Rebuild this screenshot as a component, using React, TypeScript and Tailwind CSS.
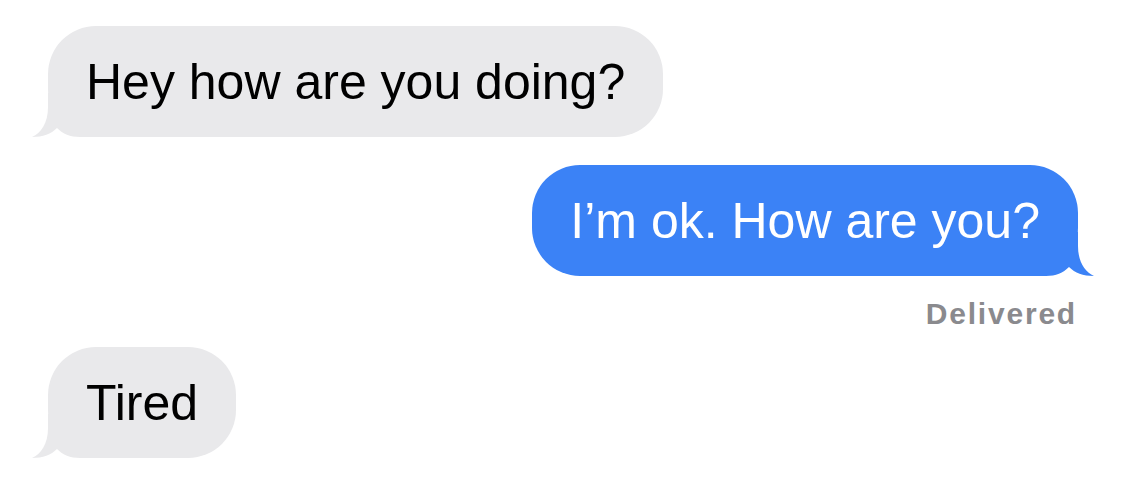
import React from 'react'

const GRAY = '#e9e9eb'
const BLUE = '#3b82f6'

// tail drawn under the bottom-left corner of an incoming bubble
const LeftTail = () => (
  <svg className="absolute -left-[16px] bottom-0" width="72" height="44" viewBox="0 0 72 44">
    <path d="M16 0 L16 14 C16 30 9 40 0 44 C11 44 19 41 25 35 C31 41 38 44 48 44 L72 44 L72 0 Z" fill={GRAY} />
  </svg>
)

// mirrored tail for the outgoing (blue) bubble
const RightTail = () => (
  <svg className="absolute -right-[16px] bottom-0" width="72" height="44" viewBox="0 0 72 44">
    <path d="M56 0 L56 14 C56 30 63 40 72 44 C61 44 53 41 47 35 C41 41 34 44 24 44 L0 44 L0 0 Z" fill={BLUE} />
  </svg>
)

const Incoming = ({ text }: { text: string }) => (
  <div className="relative h-[111px] rounded-[48px] bg-[#e9e9eb] pl-[38px] pr-[38px] flex items-center">
    <LeftTail />
    <span className="relative text-[50px] leading-[60px] text-black">{text}</span>
  </div>
)

const Outgoing = ({ text }: { text: string }) => (
  <div className="relative h-[111px] rounded-[48px] bg-[#3b82f6] pl-[38px] pr-[38px] flex items-center">
    <RightTail />
    <span className="relative text-[50px] leading-[60px] text-white">{text}</span>
  </div>
)

export default function App() {
  return (
    <div
      className="w-full h-[498px] bg-white overflow-hidden pt-[26px] pl-[48px] pr-[47px] flex flex-col"
      style={{ fontFamily: '"Liberation Sans", Arial, sans-serif' }}
    >
      <div className="flex justify-start">
        <Incoming text="Hey how are you doing?" />
      </div>

      <div className="flex justify-end mt-[28px]">
        <Outgoing text="I’m ok. How are you?" />
      </div>

      <div className="flex justify-end mt-[20px] pr-[3px]">
        <span className="text-[30px] leading-[35px] font-bold tracking-[1.8px] text-[#8a8a8e] -mr-[2px]">Delivered</span>
      </div>

      <div className="flex justify-start mt-[16px]">
        <Incoming text="Tired" />
      </div>
    </div>
  )
}
